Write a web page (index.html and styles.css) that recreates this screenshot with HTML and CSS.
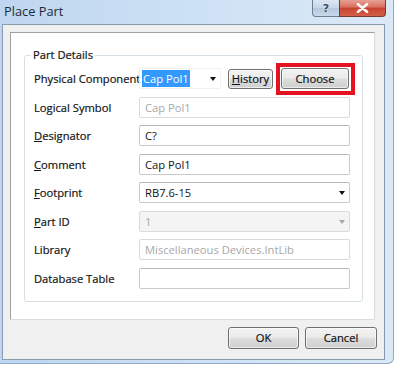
FILE: index.html
```html
<!doctype html>
<html>
  <head>
    <meta charset="utf-8" />
    <link rel="stylesheet" href="styles.css">
  </head>
  <body>
    <div class="window">
      <div class="titlebar">
        <span class="title">Place Part</span>
        <div class="caption-buttons">
          <span class="cap-btn help">?</span>
          <span class="cap-btn close">
            <svg width="13" height="10" viewBox="0 0 13 10">
              <path d="M2 1.2 L11 8.8 M11 1.2 L2 8.8" stroke="#fff" stroke-width="2.6" stroke-linecap="round" />
            </svg>
          </span>
        </div>
      </div>

      <div class="client">
        <div class="panel">
          <fieldset class="group">
            <legend>Part Details</legend>
            <div class="form-grid">
              <label>Physical Component</label>
              <div class="first-row">
                <div class="combo plain">
                  <span class="selected">Cap Pol1</span>
                  <span class="arrow"></span>
                </div>
                <span class="button history"><u>H</u>istory</span>
                <span class="highlight">
                  <span class="button choose">Choose</span>
                </span>
              </div>

              <label>Logical Symbol</label>
              <div class="field disabled">Cap Pol1</div>

              <label><u>D</u>esignator</label>
              <div class="field">C?</div>

              <label><u>C</u>omment</label>
              <div class="field">Cap Pol1</div>

              <label><u>F</u>ootprint</label>
              <div class="field combo">RB7.6-15<span class="arrow"></span></div>

              <label><u>P</u>art ID</label>
              <div class="field combo disabled grey">1<span class="arrow"></span></div>

              <label>Library</label>
              <div class="field disabled">Miscellaneous Devices.IntLib</div>

              <label>Database Table</label>
              <div class="field"></div>
            </div>
          </fieldset>
        </div>

        <div class="dialog-buttons">
          <span class="button ok">OK</span>
          <span class="button cancel">Cancel</span>
        </div>
      </div>
    </div>
  </body>
</html>
```

FILE: styles.css
```css
body {
  margin: 0;
  background: #fff;
  font-family: "Open Sans", "Noto Sans", sans-serif;
  font-size: 11.2px;
  color: #141414;
}

.window {
  box-sizing: border-box;
  width: 394px;
  height: 364px;
  padding: 0 8px 3px 2px;
  background: linear-gradient(90deg, #bed6ef 0%, #cfe2f5 55%, #dbe9f7 100%);
  border: 1px solid #8fa9c6;
  border-top: none;
  border-left: none;
  border-radius: 0 0 6px 0;
  display: flex;
  flex-direction: column;
}

.titlebar {
  height: 24px;
  display: flex;
  align-items: flex-start;
}

.title {
  margin: 2px 0 0 2px;
  font-size: 12.8px;
  color: #1e2a38;
}

.caption-buttons {
  margin-left: auto;
  margin-right: -1px;
  display: flex;
}

.cap-btn {
  height: 16px;
  display: flex;
  align-items: center;
  justify-content: center;
  border: 1px solid #6d7f95;
  border-top: none;
}

.help {
  width: 26px;
  border-right: none;
  border-radius: 0 0 0 4px;
  background: linear-gradient(#dce7f3 0%, #c6d6e8 50%, #b4c7dd 51%, #c9d9ec 100%);
  color: #3a4a60;
  font-family: "DejaVu Sans", sans-serif;
  font-weight: bold;
  font-size: 11px;
  text-shadow: 0 0 2px #fff;
}

.close {
  width: 45px;
  border-color: #7a3a32;
  border-radius: 0 0 4px 0;
  background: linear-gradient(#e8a193 0%, #d7705f 45%, #c7432f 50%, #d2604a 100%);
}

.client {
  flex: 1;
  background: #f0f0f0;
  border: 1px solid #8a9bb0;
  padding: 7px 9px 0 7px;
  display: flex;
  flex-direction: column;
}

.panel {
  background: #fff;
  border: 1px solid #a0a0a0;
  border-right-color: #dcdcdc;
  border-bottom-color: #dcdcdc;
  padding: 14px 11px 17px 13px;
}

.group {
  margin: 0;
  padding: 5px 11px 12px 9px;
  border: 1px solid #d5dfe5;
  border-radius: 3px;
}

.group legend {
  margin-left: -3px;
  padding: 0 2px;
  line-height: 16px;
  -webkit-text-stroke: 0.2px #141414;
}

.form-grid {
  display: grid;
  grid-template-columns: 105px 211px;
  grid-auto-rows: 21px;
  row-gap: 7.5px;
  align-items: center;
}

.form-grid label {
  white-space: nowrap;
  -webkit-text-stroke: 0.2px #141414;
}

.first-row {
  display: flex;
  align-items: center;
  height: 21px;
}

.first-row > * {
  flex-shrink: 0;
}

.field {
  box-sizing: border-box;
  height: 21px;
  line-height: 19px;
  padding: 0 5px;
  border: 1px solid #c9c9c9;
  border-top-color: #b8b8b8;
  border-radius: 2px;
  background: #fff;
  position: relative;
}

.disabled {
  color: #a8a8a8;
  border-color: #dadada;
}

.grey {
  background: #f4f4f4;
}

.combo.plain {
  box-sizing: border-box;
  width: 82px;
  height: 21px;
  line-height: 19px;
  padding: 0 2px;
  border: 1px solid #f2f2f2;
  position: relative;
}

.selected {
  background: #3399ff;
  color: #fff;
  padding: 1px 1px;
}

.arrow {
  position: absolute;
  right: 4px;
  top: 8px;
  width: 0;
  height: 0;
  border-left: 3.5px solid transparent;
  border-right: 3.5px solid transparent;
  border-top: 4px solid #111;
}

.disabled .arrow {
  border-top-color: #a8a8a8;
}

.button {
  box-sizing: border-box;
  display: inline-flex;
  align-items: center;
  justify-content: center;
  border: 1px solid #707070;
  border-radius: 3px;
  background: linear-gradient(#f2f2f2 0%, #ebebeb 48%, #dddddd 52%, #cfcfcf 100%);
  box-shadow: inset 0 0 0 1px rgba(255, 255, 255, 0.6);
  color: #111;
  -webkit-text-stroke: 0.2px #111;
}

.history {
  width: 45px;
  height: 20px;
  margin-left: 7px;
}

.highlight {
  display: flex;
  margin: -5px -7px -6px 3px;
  padding: 1px 2px 2px 1px;
  border: 4px solid #e4131f;
}

.choose {
  width: 68px;
  height: 21px;
}

.dialog-buttons {
  display: flex;
  justify-content: flex-end;
  gap: 6px;
  margin: 7px -2px 0 0;
}

.ok {
  width: 71px;
  height: 22px;
}

.cancel {
  width: 72px;
  height: 22px;
}
```
